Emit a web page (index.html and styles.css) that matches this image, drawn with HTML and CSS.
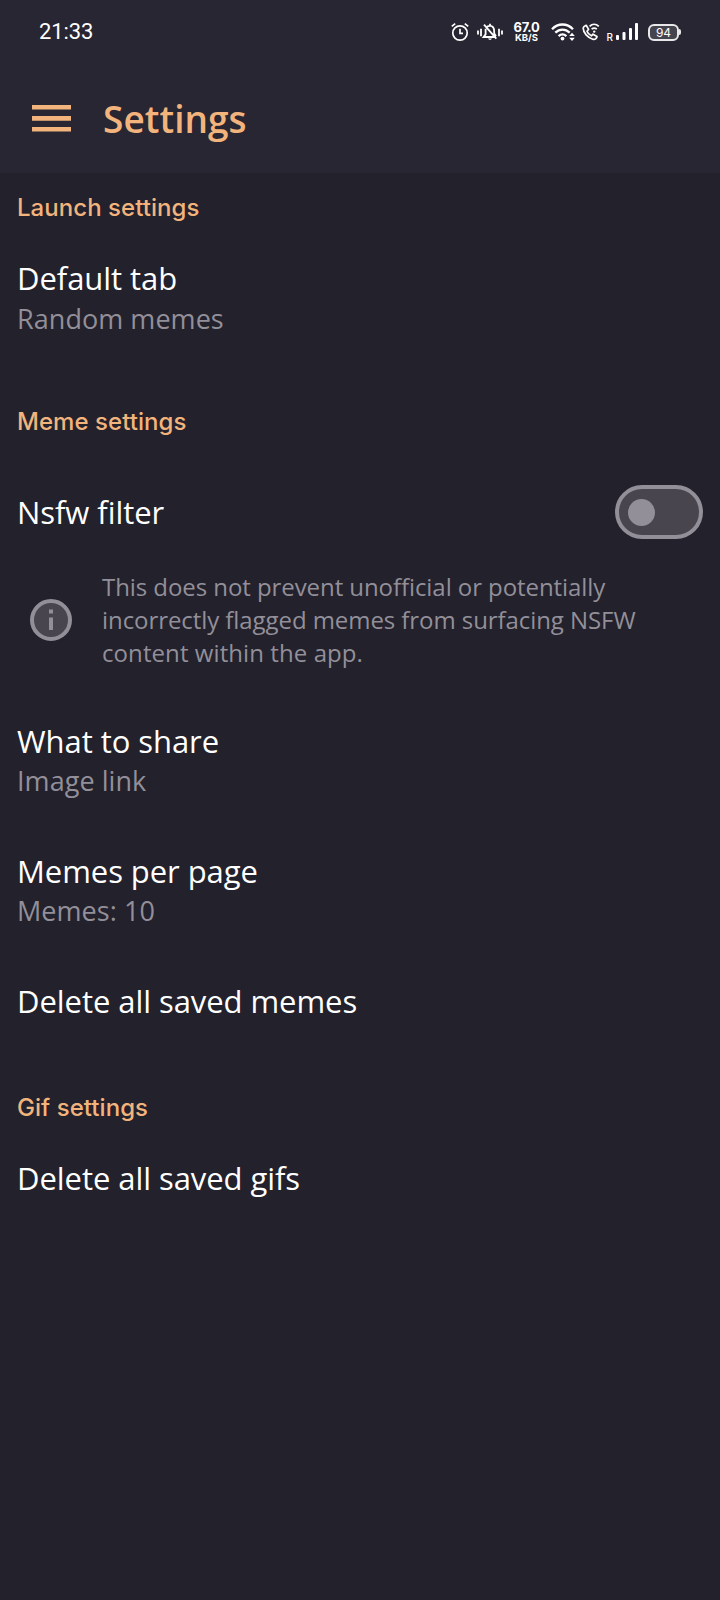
FILE: index.html
```html
<!DOCTYPE html>
<html lang="en">
<head>
<meta charset="utf-8">
<title>Settings</title>
<link rel="stylesheet" href="styles.css">
</head>
<body>
<header class="header">
  <div class="status">
    <span class="clock">21:33</span>
    <svg class="alarm" width="20" height="20" viewBox="0 0 20 20" fill="none" stroke="#fff" stroke-width="1.7"><circle cx="10" cy="11" r="7.2"/><path d="M10 6.7V11.4H13M1.8 4.4L5.2 1.6M18.2 4.4L14.8 1.6"/></svg>
    <svg class="bell" width="28" height="20" viewBox="0 0 28 20" fill="none" stroke="#fff" stroke-width="1.8"><path d="M2 8.4V12.6M5 6.8V14.2M23 6.8V14.2M26 8.4V12.6M9.6 6.8V12.4L7.6 15H20M11.2 4.8C12.3 3.6 15.7 3.4 17.2 5.4C18.5 7 18.2 9.4 18.2 11.4L20 14M8 2.6L20.3 16.6M14 1.8V4"/><path d="M11.8 16.6H16.2Q14 19.4 11.8 16.6Z" fill="#fff" stroke="none"/></svg>
    <div class="speed"><span class="rate">67.0</span><span class="unit">KB/S</span></div>
    <svg class="wifi" width="25" height="20" viewBox="0 0 25 20" fill="none" stroke="#fff" stroke-width="2.3"><path d="M1 7.2C7 .9 16 .9 22 7.2M4.3 10.7C8.6 6.6 14.4 6.6 18.7 10.7M7.6 14.1C10 12 13 12 15.4 14.1"/><circle cx="11.5" cy="16.6" r="1.9" fill="#fff" stroke="none"/><path d="M18.2 14L21 10.8L23.8 14ZM18.2 15.8L21 19L23.8 15.8Z" fill="#fff" stroke="none"/></svg>
    <svg class="call" width="18" height="20" viewBox="0 0 18 20" fill="none" stroke="#fff" stroke-width="1.7" stroke-linejoin="round"><path d="M2.2 4.4L4.2 3.3L6.6 7.4L5 9.2C5.6 11 7.2 12.8 9.4 13.8L11 12.2L15 14.4C14.8 16.6 13 17.8 10.8 17.2C5.6 15.6 1.4 10.8 1.2 6.4C1.2 5.4 1.5 4.9 2.2 4.4Z"/><path d="M7.6 4.4C10.2 1.8 14 1.8 16.8 4.4M9.6 7.2C11.2 5.8 13.2 5.8 14.8 7.2"/><circle cx="12.2" cy="9.6" r="1.2" fill="#fff" stroke="none"/></svg>
    <span class="roam">R</span>
    <svg class="signal" width="22" height="18" viewBox="0 0 22 18" fill="#fff"><rect y="12" width="3" height="5" rx="1"/><rect x="6.5" y="9" width="3" height="8" rx="1"/><rect x="13" y="5" width="3" height="12" rx="1"/><rect x="19" y="0" width="3" height="17" rx="1"/></svg>
    <div class="battery"><span class="level">94</span></div><span class="nub"></span>
  </div>
  <div class="toolbar">
    <svg class="menu" width="39" height="27" viewBox="0 0 39 27" fill="#f2b47c"><path d="M0 0H39V4.6H0ZM0 11H39V15.8H0ZM0 22H39V26.6H0Z"/></svg>
    <h1 class="title">Settings</h1>
  </div>
</header>
<main class="content">
  <h2 class="section">Launch settings</h2>
  <div class="item first"><div class="name">Default tab</div><div class="value">Random memes</div></div>
  <h2 class="section later">Meme settings</h2>
  <div class="toggle-row"><div class="name">Nsfw filter</div><div class="switch"><span class="thumb"></span></div></div>
  <div class="note">
    <svg class="info" width="42" height="42" viewBox="0 0 42 42"><circle cx="21" cy="21" r="19" fill="#48454f" stroke="#938f99" stroke-width="4"/><path d="M19 10.5H23V14.5H19ZM19 18.5H23V31H19Z" fill="#938f99"/></svg>
    <p class="note-text">This does not prevent unofficial or potentially<br>incorrectly flagged memes from surfacing NSFW<br><span class="note-end">content within the app.</span></p>
  </div>
  <div class="item"><div class="name">What to share</div><div class="value">Image link</div></div>
  <div class="item"><div class="name">Memes per page</div><div class="value">Memes: 10</div></div>
  <div class="item"><div class="name">Delete all saved memes</div></div>
  <h2 class="section later">Gif settings</h2>
  <div class="item first"><div class="name">Delete all saved gifs</div></div>
</main>
</body>
</html>
```
FILE: styles.css
```css
* { box-sizing: border-box; }
body { margin: 0; min-height: 1600px; background: #22212c; color: #fff; font-family: "Open Sans", sans-serif; }
h1, h2, p { margin: 0; }
svg { display: block; flex: none; }
.header { height: 173px; background: #272632; }
.status { display: flex; align-items: center; height: 64px; padding: 0 39px; }
.clock { margin-right: auto; font: 400 22px/30px Roboto, sans-serif; letter-spacing: -.1px; }
.alarm { margin-right: -1px; }
.bell { margin-left: 7px; }
.speed { display: flex; flex-direction: column; align-items: center; width: 28px; margin-left: 9px; font-family: Inter, sans-serif; }
.rate { font-size: 13px; line-height: 12px; font-weight: 700; letter-spacing: -.3px; }
.unit { font-size: 9.5px; line-height: 10px; font-weight: 700; }
.wifi { margin-left: 10px; }
.call { margin-left: 6px; }
.roam { margin: 10px 0 0 7px; font: 500 10px/12px Inter, sans-serif; }
.signal { margin-left: 3px; }
.battery { display: flex; align-items: center; justify-content: center; width: 31px; height: 17px; margin-left: 10px; border: 2px solid #e8e8ea; border-radius: 6px; background: #45444e; }
.level { font: 400 12px/13px Inter, sans-serif; }
.nub { width: 2px; height: 6px; background: #e8e8ea; border-radius: 0 2px 2px 0; }
.toolbar { display: flex; align-items: center; height: 108px; padding: 0 0 0 32px; }
.title { margin-left: 32px; padding-top: 1px; color: #f2b47c; font-size: 37px; line-height: 50px; font-weight: 600; letter-spacing: .05px; }
.content { padding: 19px 17px 0; }
.section { color: #f2b47c; font: 500 24px/32px Inter, sans-serif; letter-spacing: .05px; }
.later { margin-top: 69px; }
.item { margin-top: 50px; }
.first { margin-top: 32px; }
.first .value { margin-top: 1px; }
.name { font-size: 31px; line-height: 44px; letter-spacing: -.06px; }
.value { color: #938f99; font-size: 27px; line-height: 36px; letter-spacing: .05px; }
.toggle-row { display: flex; align-items: center; justify-content: space-between; height: 54px; margin-top: 47px; }
.switch { display: flex; align-items: center; width: 88px; height: 54px; padding-left: 9px; border: 4px solid #938f99; border-radius: 27px; background: #48454f; }
.thumb { width: 27px; height: 27px; border-radius: 50%; background: #938f99; }
.note { display: flex; align-items: center; margin-top: 31px; padding-left: 13px; }
.note-text { margin-left: 30px; color: #938f99; font-size: 24px; line-height: 33px; letter-spacing: -.07px; }
.note-end { letter-spacing: .08px; }
```
